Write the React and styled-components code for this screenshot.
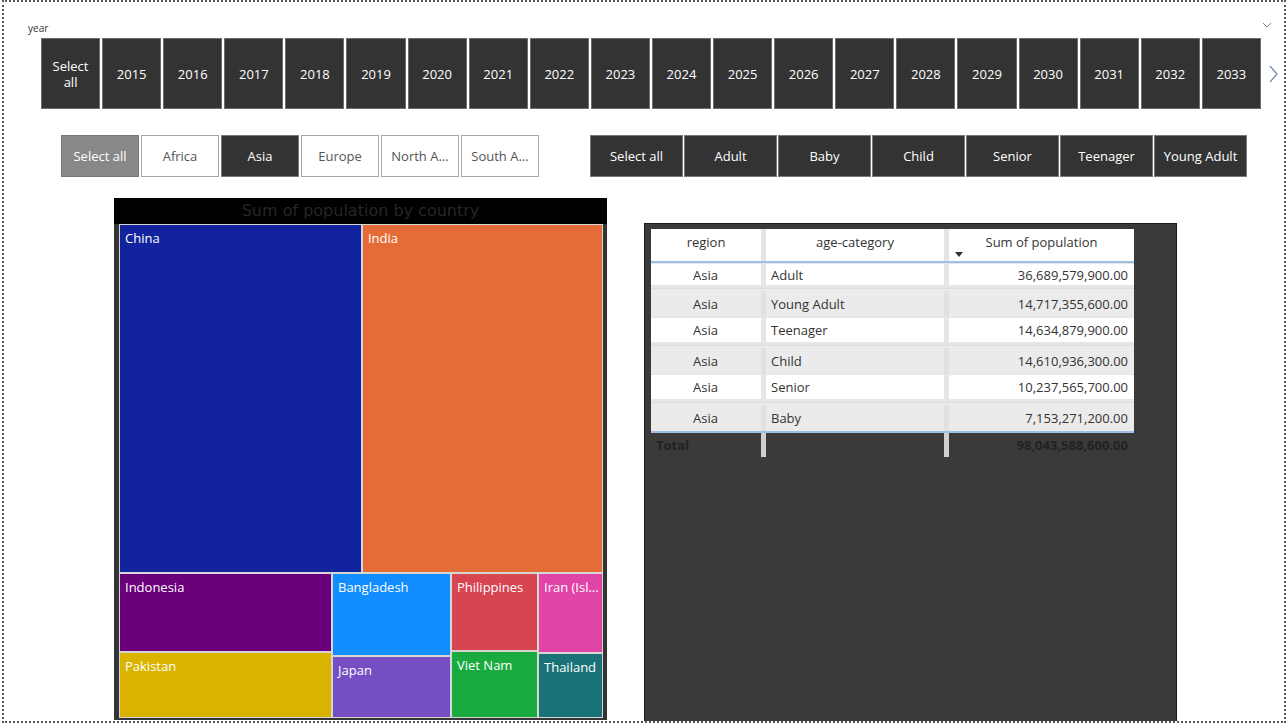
import React from "react";
import styled, { createGlobalStyle } from "styled-components";

const GlobalStyle = createGlobalStyle`
  html, body {
    margin: 0;
    padding: 0;
    background: #ffffff;
  }
  body {
    font-family: "Segoe UI", "Open Sans", sans-serif;
  }
`;

const Page = styled.div`
  box-sizing: border-box;
  margin-left: 2px;
  width: 1284px;
  height: 723px;
  border: 2px dotted #555;
  position: relative;
  overflow: hidden;
`;

const YearSection = styled.div`
  padding: 20px 0 0 24px;
  position: relative;
`;

const YearLabel = styled.div`
  font-size: 10px;
  color: #333;
  height: 16px;
  line-height: 12px;
`;

const DownChevron = styled.svg`
  position: absolute;
  right: 12px;
  top: 20px;
`;

const YearRow = styled.div`
  display: flex;
  align-items: center;
  padding-left: 13px;
`;

const YearButtons = styled.div`
  display: flex;
  gap: 2px;
  width: 1220px;
`;

const YearButton = styled.div`
  flex: 1;
  height: 71px;
  box-sizing: border-box;
  background: #333;
  border: 1px solid #6e6e6e;
  color: #fff;
  font-size: 13px;
  line-height: 16px;
  display: flex;
  align-items: center;
  justify-content: center;
  text-align: center;
  padding: 0 6px;
`;

const RightChevron = styled.svg`
  margin-left: 8px;
`;

const FilterRow = styled.div`
  display: flex;
  margin-top: 26px;
  padding-left: 57px;
`;

const RegionGroup = styled.div`
  display: flex;
  gap: 2px;
`;

const RegionButton = styled.div`
  width: 78px;
  height: 42px;
  box-sizing: border-box;
  border: 1px solid ${(p) => (p.$variant === "plain" ? "#a8a8a8" : "#777")};
  background: ${(p) =>
    p.$variant === "all" ? "#888" : p.$variant === "on" ? "#333" : "#fff"};
  color: ${(p) => (p.$variant === "plain" ? "#555" : "#fff")};
  font-size: 13px;
  display: flex;
  align-items: center;
  justify-content: center;
  white-space: nowrap;
`;

const AgeGroup = styled.div`
  display: flex;
  gap: 1px;
  margin-left: 51px;
  width: 657px;
`;

const AgeButton = styled.div`
  flex: 1;
  height: 42px;
  box-sizing: border-box;
  background: #333;
  border: 1px solid #777;
  color: #fff;
  font-size: 13px;
  display: flex;
  align-items: center;
  justify-content: center;
  white-space: nowrap;
`;

const Visuals = styled.div`
  display: flex;
  align-items: flex-start;
  margin-top: 21px;
  padding-left: 110px;
`;

const TreemapPanel = styled.div`
  width: 493px;
  height: 522px;
  background: #000;
  display: flex;
  flex-direction: column;
`;

const TreemapTitle = styled.div`
  height: 26px;
  color: #262626;
  font-family: "DejaVu Sans", "Noto Sans", sans-serif;
  font-size: 16px;
  text-align: center;
  line-height: 26px;
`;

const TreemapBody = styled.div`
  flex: 1;
  background: #343434;
  padding: 0 4px 2px 5px;
  display: flex;
`;

const Tiles = styled.div`
  flex: 1;
  background: #d6d6d6;
  padding: 1px;
  display: flex;
  flex-direction: column;
  gap: 2px;
  min-width: 0;
`;

const TileRow = styled.div`
  display: flex;
  gap: 2px;
  height: ${(p) => p.$h}px;
  flex: ${(p) => (p.$grow ? 1 : "none")};
`;

const TileColumn = styled.div`
  display: flex;
  flex-direction: column;
  gap: 2px;
  flex: ${(p) => p.$w} 1 0;
  min-width: 0;
`;

const Tile = styled.div`
  background: ${(p) => p.$c};
  color: #fff;
  font-size: 13px;
  padding: 4px 5px;
  box-sizing: border-box;
  overflow: hidden;
  white-space: nowrap;
  flex: ${(p) => p.$f || 1} 1 0;
  min-width: 0;
`;

const TablePanel = styled.div`
  margin-left: 37px;
  margin-top: 25px;
  width: 533px;
  height: 505px;
  box-sizing: border-box;
  background: #3a3a3a;
  border: 1px solid #1c1c1c;
  padding: 5px 0 0 6px;
`;

const Table = styled.div`
  width: 483px;
  font-size: 13px;
  color: #333;
`;

const cols = "110px 5px 178px 5px 185px";

const HeaderRow = styled.div`
  display: grid;
  grid-template-columns: ${cols};
  height: 32px;
  border-bottom: 2px solid #9cc0e6;
  background: #e4e4e4;
`;

const HeadCell = styled.div`
  background: #fff;
  text-align: center;
  padding-top: 4px;
  position: relative;
`;

const SortArrow = styled.span`
  position: absolute;
  left: 6px;
  bottom: 4px;
  width: 0;
  height: 0;
  border-left: 4px solid transparent;
  border-right: 4px solid transparent;
  border-top: 5px solid #333;
`;

const Gutter = styled.div`
  background: ${(p) => p.$c || "#e4e4e4"};
`;

const DataRow = styled.div`
  display: grid;
  grid-template-columns: ${cols};
  height: ${(p) => p.$h}px;
  background: ${(p) => (p.$alt ? "#ebebeb" : "#e6e6e6")};
  box-sizing: border-box;
  padding: ${(p) => (p.$alt ? "2px 0 0" : "1px 0 3px")};
  border-top: ${(p) => (p.$alt ? "1px solid #dedede" : "none")};
`;

const Cell = styled.div`
  background: ${(p) => (p.$alt ? "#ebebeb" : "#fff")};
  display: flex;
  align-items: center;
  justify-content: ${(p) =>
    p.$align === "right" ? "flex-end" : p.$align === "center" ? "center" : "flex-start"};
  padding: 0 6px 0 5px;
  white-space: nowrap;
`;

const TableFoot = styled.div`
  border-top: 2px solid #9cc0e6;
  display: grid;
  grid-template-columns: ${cols};
  height: 24px;
`;

const TotalCell = styled.div`
  color: #222;
  font-weight: bold;
  display: flex;
  align-items: center;
  justify-content: ${(p) => (p.$right ? "flex-end" : "flex-start")};
  padding: 0 6px 0 5px;
`;

const years = [];
for (let y = 2015; y <= 2033; y++) years.push(String(y));

const regions = [
  { t: "Select all", v: "all" },
  { t: "Africa", v: "plain" },
  { t: "Asia", v: "on" },
  { t: "Europe", v: "plain" },
  { t: "North A...", v: "plain" },
  { t: "South A...", v: "plain" },
];

const ages = ["Select all", "Adult", "Baby", "Child", "Senior", "Teenager", "Young Adult"];

const rows = [
  ["Adult", "36,689,579,900.00"],
  ["Young Adult", "14,717,355,600.00"],
  ["Teenager", "14,634,879,900.00"],
  ["Child", "14,610,936,300.00"],
  ["Senior", "10,237,565,700.00"],
  ["Baby", "7,153,271,200.00"],
];

const rowHeights = [25, 29, 28, 29, 28, 29];

const lowerColumns = [
  { w: 211, tiles: [["Indonesia", "#6B007B", 78], ["Pakistan", "#D9B300", 64]] },
  { w: 117, tiles: [["Bangladesh", "#118DFF", 83], ["Japan", "#744EC2", 59]] },
  { w: 85, tiles: [["Philippines", "#D64550", 77], ["Viet Nam", "#1AAB40", 65]] },
  { w: 63, tiles: [["Iran (Isl...", "#E044A7", 80], ["Thailand", "#197278", 62]] },
];

export default function App() {
  return (
    <>
      <GlobalStyle />
      <Page>
        <YearSection>
          <YearLabel>year</YearLabel>
          <DownChevron width="10" height="6" viewBox="0 0 10 6">
            <path d="M1 1 L5 5 L9 1" fill="none" stroke="#6f8aa8" strokeWidth="1" />
          </DownChevron>
          <YearRow>
            <YearButtons>
              <YearButton>Select all</YearButton>
              {years.map((y) => (
                <YearButton key={y}>{y}</YearButton>
              ))}
            </YearButtons>
            <RightChevron width="10" height="18" viewBox="0 0 10 18">
              <path d="M1 1 L8 9 L1 17" fill="none" stroke="#6f8aa8" strokeWidth="1.2" />
            </RightChevron>
          </YearRow>
        </YearSection>

        <FilterRow>
          <RegionGroup>
            {regions.map((r) => (
              <RegionButton key={r.t} $variant={r.v}>
                {r.t}
              </RegionButton>
            ))}
          </RegionGroup>
          <AgeGroup>
            {ages.map((a) => (
              <AgeButton key={a}>{a}</AgeButton>
            ))}
          </AgeGroup>
        </FilterRow>

        <Visuals>
          <TreemapPanel>
            <TreemapTitle>Sum of population by country</TreemapTitle>
            <TreemapBody>
              <Tiles>
                <TileRow $h={347}>
                  <Tile $c="#12239E" $f={241}>China</Tile>
                  <Tile $c="#E66C37" $f={239}>India</Tile>
                </TileRow>
                <TileRow $grow>
                  {lowerColumns.map((col) => (
                    <TileColumn key={col.w} $w={col.w}>
                      {col.tiles.map(([name, c, f]) => (
                        <Tile key={name} $c={c} $f={f}>
                          {name}
                        </Tile>
                      ))}
                    </TileColumn>
                  ))}
                </TileRow>
              </Tiles>
            </TreemapBody>
          </TreemapPanel>

          <TablePanel>
            <Table>
              <HeaderRow>
                <HeadCell>region</HeadCell>
                <Gutter />
                <HeadCell>age-category</HeadCell>
                <Gutter />
                <HeadCell>
                  Sum of population
                  <SortArrow />
                </HeadCell>
              </HeaderRow>
              {rows.map(([age, val], i) => {
                const alt = i % 2 === 1;
                return (
                  <DataRow key={age} $alt={alt} $h={rowHeights[i]}>
                    <Cell $alt={alt} $align="center">Asia</Cell>
                    <Gutter $c={alt ? "#e0e0e0" : "#e6e6e6"} />
                    <Cell $alt={alt}>{age}</Cell>
                    <Gutter $c={alt ? "#e0e0e0" : "#e6e6e6"} />
                    <Cell $alt={alt} $align="right">{val}</Cell>
                  </DataRow>
                );
              })}
              <TableFoot>
                <TotalCell>Total</TotalCell>
                <Gutter $c="#d0d0d0" />
                <TotalCell />
                <Gutter $c="#d0d0d0" />
                <TotalCell $right>98,043,588,600.00</TotalCell>
              </TableFoot>
            </Table>
          </TablePanel>
        </Visuals>
      </Page>
    </>
  );
}
